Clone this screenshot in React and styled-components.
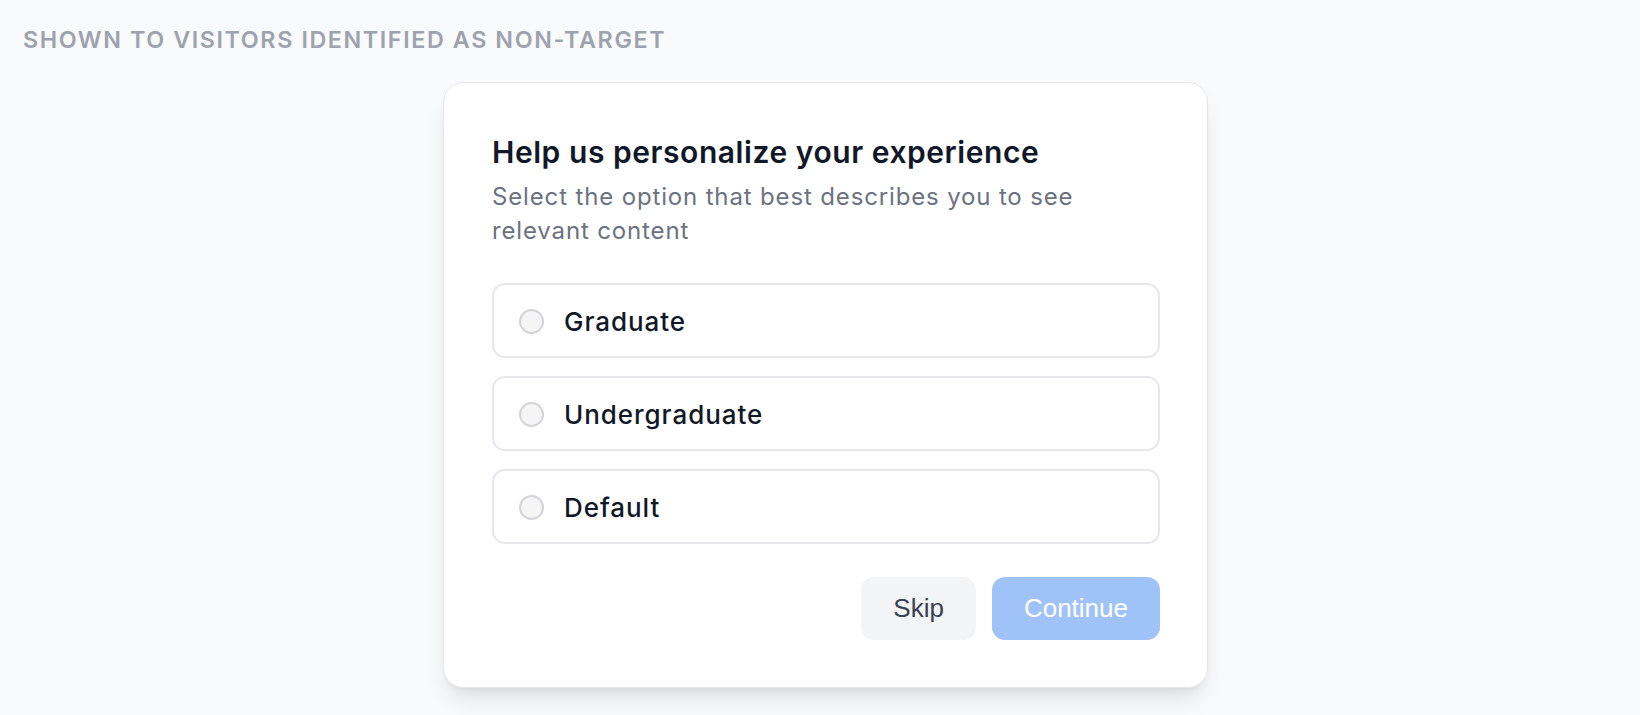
import React, { useState } from "react";
import styled, { createGlobalStyle } from "styled-components";

const Global = createGlobalStyle`
  html, body { margin: 0; padding: 0; background: #f9fafb; }
  body { font-family: Inter, "Noto Sans", sans-serif; -webkit-font-smoothing: antialiased; }
  * { box-sizing: border-box; }
`;

const Page = styled.div`
  min-height: 715px;
  padding: 23px 23px;
  background: #f9fafb;
`;

const Label = styled.div`
  font-size: 23.3px;
  line-height: 33.3px;
  font-weight: 600;
  letter-spacing: 1.6px;
  text-transform: uppercase;
  color: #9ca3af;
  margin-bottom: 26px;
`;

const Card = styled.div`
  width: 765px;
  margin-left: 420px;
  background: #ffffff;
  border: 1px solid #e5e7eb;
  border-radius: 20px;
  padding: 48px 47px 47px 48px;
  box-shadow: 0 16px 25px -5px rgba(0, 0, 0, 0.1), 0 6px 10px -6px rgba(0, 0, 0, 0.1);
`;

const Title = styled.h2`
  margin: 0;
  font-size: 30px;
  line-height: 42px;
  font-weight: 600;
  letter-spacing: 0.55px;
  color: #111827;
`;

const Subtitle = styled.p`
  margin: 7px 0 34.5px;
  font-size: 24px;
  line-height: 34px;
  letter-spacing: 0.85px;
  color: #6b7280;
`;

const Options = styled.div`
  display: flex;
  flex-direction: column;
  gap: 18px;
`;

const Option = styled.label`
  display: flex;
  align-items: center;
  gap: 20px;
  height: 75px;
  padding: 3px 25px 0;
  border: 2px solid ${(p) => (p.$selected ? "#3b82f6" : "#e5e7eb")};
  border-radius: 13px;
  cursor: pointer;
  background: #fff;
`;

const Radio = styled.span`
  flex: none;
  width: 25px;
  height: 25px;
  border-radius: 50%;
  border: 2px solid #d4d4d8;
  background: ${(p) => (p.$selected ? "#3b82f6" : "#f5f5f5")};
`;

const OptionText = styled.span`
  font-size: 26px;
  line-height: 36px;
  font-weight: 500;
  letter-spacing: 0.95px;
  color: #111827;
`;

const Actions = styled.div`
  display: flex;
  justify-content: flex-end;
  gap: 16px;
  margin-top: 33px;
`;

const Button = styled.button`
  font-family: "Liberation Sans", Arial, sans-serif;
  font-size: 26px;
  line-height: 30px;
  padding: 16.7px 32px;
  border: none;
  border-radius: 13px;
  cursor: ${(p) => (p.disabled ? "default" : "pointer")};
  background: ${(p) => (p.$primary ? "#9fc3f9" : "#f3f4f6")};
  color: ${(p) => (p.$primary ? "#ffffff" : "#374151")};
`;

const options = ["Graduate", "Undergraduate", "Default"];

export default function App() {
  const [selected, setSelected] = useState(null);
  return (
    <>
      <Global />
      <Page>
        <Label>Shown to visitors identified as non-target</Label>
        <Card>
          <Title>Help us personalize your experience</Title>
          <Subtitle>Select the option that best describes you to see relevant content</Subtitle>
          <Options>
            {options.map((o) => (
              <Option key={o} $selected={selected === o} onClick={() => setSelected(o)}>
                <Radio $selected={selected === o} />
                <OptionText>{o}</OptionText>
              </Option>
            ))}
          </Options>
          <Actions>
            <Button>Skip</Button>
            <Button $primary disabled={!selected}>Continue</Button>
          </Actions>
        </Card>
      </Page>
    </>
  );
}
